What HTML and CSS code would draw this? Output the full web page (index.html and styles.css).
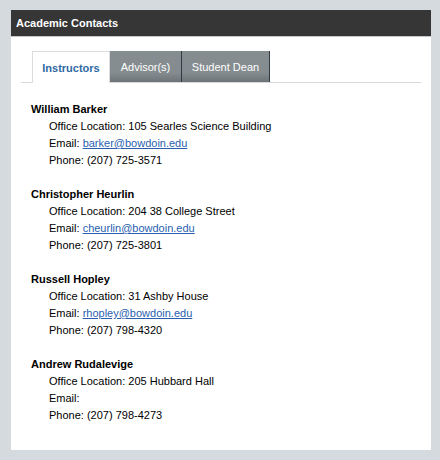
FILE: index.html
```html
<!DOCTYPE html>
<html>
<head>
<meta charset="utf-8">
<link rel="stylesheet" href="styles.css">
</head>
<body>
<div class="panel">
  <div class="panel-header">Academic Contacts</div>
  <div class="panel-body">
    <ul class="tabs">
      <li class="tab active">Instructors</li>
      <li class="tab">Advisor(s)</li>
      <li class="tab">Student Dean</li>
    </ul>
    <div class="contacts">
      <div class="contact">
        <div class="name">William Barker</div>
        <div class="detail">Office Location: 105 Searles Science Building</div>
        <div class="detail">Email: <a href="#">barker@bowdoin.edu</a></div>
        <div class="detail">Phone: (207) 725-3571</div>
      </div>
      <div class="contact">
        <div class="name">Christopher Heurlin</div>
        <div class="detail">Office Location: 204 38 College Street</div>
        <div class="detail">Email: <a href="#">cheurlin@bowdoin.edu</a></div>
        <div class="detail">Phone: (207) 725-3801</div>
      </div>
      <div class="contact">
        <div class="name">Russell Hopley</div>
        <div class="detail">Office Location: 31 Ashby House</div>
        <div class="detail">Email: <a href="#">rhopley@bowdoin.edu</a></div>
        <div class="detail">Phone: (207) 798-4320</div>
      </div>
      <div class="contact">
        <div class="name">Andrew Rudalevige</div>
        <div class="detail">Office Location: 205 Hubbard Hall</div>
        <div class="detail">Email:</div>
        <div class="detail">Phone: (207) 798-4273</div>
      </div>
    </div>
  </div>
</div>
</body>
</html>
```
FILE: styles.css
```css
html, body {
  margin: 0;
  padding: 0;
}
body {
  background: #d4dadd;
  font-family: "Liberation Sans", Arial, sans-serif;
  font-size: 11px;
  color: #000;
  width: 440px;
  height: 460px;
  overflow: hidden;
}
.panel {
  margin: 10px 0 0 11px;
  width: 420px;
  height: 440px;
  background: #fff;
}
.panel-header {
  height: 27px;
  line-height: 26px;
  background: #363636;
  color: #fff;
  font-weight: bold;
  padding-left: 5px;
  border-bottom: 1px solid #c4c8ca;
  box-sizing: border-box;
}
.panel-body {
  padding: 14px 10px 0 10px;
}
.tabs {
  list-style: none;
  margin: 0;
  padding: 0 0 0 11px;
  display: flex;
  height: 31px;
  border-bottom: 1px solid #d8d8d8;
}
.tab {
  height: 31px;
  line-height: 32px;
  text-align: center;
  color: #fff;
  font-size: 11px;
  background: linear-gradient(#868d90 0%, #858c8f 70%, #6e7578 100%);
  border-right: 1px solid #2f3b42;
  box-sizing: border-box;
}
.tab:nth-child(2) { width: 72px; }
.tab:nth-child(3) { width: 88px; }
.tab.active {
  width: 78px;
  background: #fff;
  color: #2f6aa3;
  font-weight: bold;
  border: 1px solid #dcdcdc;
  border-bottom: none;
  height: 32px;
  line-height: 33px;
}
.contacts {
  padding: 18px 0 0 10px;
}
.contact {
  margin-bottom: 17px;
  line-height: 17px;
}
.name {
  font-weight: bold;
}
.detail {
  padding-left: 18px;
}
.detail a {
  color: #2a5fb0;
  text-decoration: underline;
}
```
